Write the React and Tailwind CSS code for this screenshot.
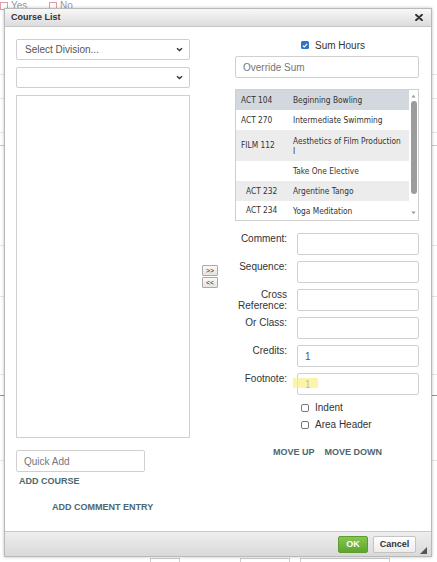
import React from "react";

const rows = [
  { code: "ACT 104", name: ["Beginning Bowling"], bg: "bg-[#d3d8de]", h: "h-[20px]" },
  { code: "ACT 270", name: ["Intermediate Swimming"], bg: "bg-white", h: "h-[20px]" },
  { code: "FILM 112", name: ["Aesthetics of Film Production", "I"], bg: "bg-[#ececec]", h: "h-[31px]" },
  { code: "", name: ["Take One Elective"], bg: "bg-white", h: "h-[20px]" },
  { code: "ACT 232", name: ["Argentine Tango"], bg: "bg-[#ececec]", h: "h-[20px]", indent: true },
  { code: "ACT 234", name: ["Yoga Meditation"], bg: "bg-white", h: "h-[19px]", indent: true },
];

function Chevron() {
  return (
    <svg width="7" height="5" viewBox="0 0 7 5" className="shrink-0">
      <path d="M1 1.2 L3.5 3.6 L6 1.2" fill="none" stroke="#333" strokeWidth="1.4" />
    </svg>
  );
}

function Select({ text }) {
  return (
    <div className="h-[21px] w-full border border-[#cfcfcf] rounded-[2px] bg-white flex items-center justify-between pl-[8px] pr-[6px]">
      <span className="text-[10px] text-[#555]">{text}</span>
      <Chevron />
    </div>
  );
}

function Input({ placeholder, value, className = "" }) {
  return (
    <div className={`h-[22px] border border-[#d0d0d0] rounded-[2px] bg-white flex items-center pl-[7px] ${className}`}>
      {placeholder && <span className="text-[10px] text-[#777]">{placeholder}</span>}
      {value && <span className="text-[10px] text-[#555]">{value}</span>}
    </div>
  );
}

function Box() {
  return <span className="w-[8px] h-[8px] border border-[#777] rounded-[2px] bg-white shrink-0" />;
}

function FormRow({ label, children }) {
  return (
    <div className="h-[22px] flex">
      <div className="w-[52px] text-right text-[10px] leading-[11px] text-[#333]">{label}</div>
      <div className="ml-[10px] w-[122px]">{children}</div>
    </div>
  );
}

export default function App() {
  return (
    <div
      className="relative w-[437px] h-[562px] overflow-hidden bg-white"
      style={{ fontFamily: '"Liberation Sans", Arial, sans-serif' }}
    >
      {/* background page behind the dialog */}
      <div className="absolute left-0 top-[1px] flex items-center gap-[3px]">
        <span className="w-[8px] h-[8px] border border-[#e29aa6] bg-white" />
        <span className="text-[10px] text-[#999] leading-[10px]">Yes</span>
      </div>
      <div className="absolute left-[49px] top-[1px] flex items-center gap-[3px]">
        <span className="w-[8px] h-[8px] border border-[#e29aa6] bg-white" />
        <span className="text-[10px] text-[#999] leading-[10px]">No</span>
      </div>
      <div className="absolute left-0 right-0 top-[74px] border-t border-[#e6e6e6]" />
      <div className="absolute left-0 right-0 top-[98px] border-t border-[#e6e6e6]" />
      <div className="absolute left-0 right-0 top-[132px] border-t border-[#e6e6e6]" />
      <div className="absolute left-0 right-0 top-[145px] border-t border-[#c9c3e6]" />
      <div className="absolute left-0 right-0 top-[245px] border-t border-[#e6e6e6]" />
      <div className="absolute left-0 right-0 top-[296px] border-t border-[#e6e6e6]" />
      <div className="absolute left-0 right-0 top-[374px] border-t border-[#e6e6e6]" />
      <div className="absolute left-0 right-0 top-[395px] border-t border-[#8f86cf]" />
      <div className="absolute left-0 right-0 top-[460px] border-t border-[#e6e6e6]" />
      <div className="absolute left-[150px] top-[558px] w-[30px] h-[8px] border border-[#ccc]" />
      <div className="absolute left-[240px] top-[558px] w-[50px] h-[8px] border border-[#ccc]" />
      <div className="absolute left-[300px] top-[558px] w-[90px] h-[8px] border border-[#ccc]" />

      {/* dialog window */}
      <div className="absolute left-[4px] top-[8px] w-[428px] h-[549px] border border-[#b9b9b9] bg-white flex flex-col shadow-[0_0_3px_rgba(0,0,0,0.25)]">
        {/* title bar */}
        <div className="h-[18px] shrink-0 flex items-center justify-between pl-[6px] pr-[8px] bg-gradient-to-b from-[#f8f8f8] to-[#dcdcdc] border-b border-[#c6c6c6]">
          <span className="text-[9px] font-bold text-[#333]">Course List</span>
          <svg width="8" height="7" viewBox="0 0 8 7">
            <path d="M1 0.8 L7 6.2 M7 0.8 L1 6.2" stroke="#333" strokeWidth="1.9" strokeLinecap="round" />
          </svg>
        </div>

        {/* body */}
        <div className="flex-1 flex pt-[12px] pl-[11px]">
          {/* left column */}
          <div className="w-[174px] flex flex-col">
            <Select text="Select Division..." />
            <div className="mt-[7px]">
              <Select text="" />
            </div>
            <div className="mt-[7px] h-[343px] border border-[#d0d0d0] bg-white" />
            <Input placeholder="Quick Add" className="mt-[12px] w-[129px] h-[21px]" />
            <div className="mt-[4px] ml-[3px] text-[9px] leading-[10px] font-semibold text-[#4c6770]">ADD COURSE</div>
            <div className="mt-[16px] ml-[36px] text-[9px] leading-[10px] font-semibold text-[#4c6770]">ADD COMMENT ENTRY</div>
          </div>

          {/* middle buttons */}
          <div className="ml-[12px] w-[16px] pt-[226px] flex flex-col gap-[1px]">
            <div className="h-[11px] border border-[#aaa] rounded-[1px] bg-gradient-to-b from-[#fafafa] to-[#e4e4e4] flex items-center justify-center text-[7px] leading-none text-[#222]">&gt;&gt;</div>
            <div className="h-[11px] border border-[#aaa] rounded-[1px] bg-gradient-to-b from-[#fafafa] to-[#e4e4e4] flex items-center justify-center text-[7px] leading-none text-[#222]">&lt;&lt;</div>
          </div>

          {/* right column */}
          <div className="ml-[17px] w-[184px] flex flex-col">
            <div className="h-[12px] flex items-center ml-[66px] gap-[6px]">
              <span className="w-[8px] h-[8px] rounded-[1.5px] bg-[#2c74c9] flex items-center justify-center">
                <svg width="6" height="5" viewBox="0 0 6 5">
                  <path d="M0.8 2.6 L2.3 4 L5.2 0.9" fill="none" stroke="white" strokeWidth="1.2" />
                </svg>
              </span>
              <span className="text-[10px] text-[#333]">Sum Hours</span>
            </div>
            <Input placeholder="Override Sum" className="mt-[5px] h-[21px]" />

            {/* course list box */}
            <div className="mt-[11px] h-[132px] border border-[#cfcfcf] bg-white flex">
              <div className="flex-1 flex flex-col" style={{ fontFamily: '"DejaVu Sans Condensed", "DejaVu Sans", sans-serif' }}>
                {rows.map((r, i) => (
                  <div key={i} className={`${r.h} ${r.bg} flex items-center text-[8.3px] text-[#333]`}>
                    <div className={`w-[52px] shrink-0 ${r.indent ? "pl-[10px]" : "pl-[5px]"}`}>{r.code}</div>
                    <div className="pl-[5px] leading-[10px]">
                      {r.name.map((n, j) => (
                        <div key={j} className="whitespace-nowrap">{n}</div>
                      ))}
                    </div>
                  </div>
                ))}
              </div>
              <div className="w-[9px] shrink-0 flex flex-col items-center">
                <svg width="5" height="4" viewBox="0 0 5 4" className="mt-[4px]">
                  <path d="M0.5 3.5 L2.5 0.8 L4.5 3.5 Z" fill="#999" />
                </svg>
                <div className="mt-[3px] w-[6px] h-[93px] rounded-[3px] bg-[#9c9c9c]" />
                <svg width="5" height="4" viewBox="0 0 5 4" className="mt-[17px]">
                  <path d="M0.5 0.5 L2.5 3.2 L4.5 0.5 Z" fill="#999" />
                </svg>
              </div>
            </div>

            {/* form rows */}
            <div className="mt-[12px] flex flex-col gap-[6px]">
              <FormRow label="Comment:"><Input /></FormRow>
              <FormRow label="Sequence:"><Input /></FormRow>
              <FormRow label={<>Cross<br />Reference:</>}><Input /></FormRow>
              <FormRow label="Or Class:"><Input /></FormRow>
              <FormRow label="Credits:"><Input value="1" /></FormRow>
              <FormRow label="Footnote:">
                <div className="relative">
                  <Input value="1" />
                  <div className="absolute left-[-4px] top-[5px] w-[25px] h-[10px] bg-[#fbef8a] opacity-70" />
                </div>
              </FormRow>
            </div>

            <div className="mt-[7px] ml-[66px] h-[12px] flex items-center gap-[6px]">
              <Box />
              <span className="text-[10px] text-[#333] -mt-[2px]">Indent</span>
            </div>
            <div className="mt-[5px] ml-[66px] h-[12px] flex items-center gap-[6px]">
              <Box />
              <span className="text-[10px] text-[#333] -mt-[2px]">Area Header</span>
            </div>

            <div className="mt-[16px] ml-[38px] flex gap-[10px] text-[9px] leading-[10px] font-semibold text-[#4c6770]">
              <span>MOVE UP</span>
              <span>MOVE DOWN</span>
            </div>
          </div>
        </div>

        {/* footer */}
        <div className="relative h-[25px] shrink-0 border-t border-[#c8c8c8] bg-gradient-to-b from-[#eeeeee] to-[#d9d9d9] flex items-start justify-end pt-[4px] pr-[15px] gap-[5px]">
          <div className="w-[30px] h-[17px] rounded-[2px] border border-[#5c9c30] bg-gradient-to-b from-[#86c64c] to-[#5ea52e] flex items-center justify-center text-[9px] font-bold text-white">OK</div>
          <div className="w-[43px] h-[17px] rounded-[2px] border border-[#c4c4c4] bg-gradient-to-b from-[#ffffff] to-[#ececec] flex items-center justify-center text-[9px] font-bold text-[#333]">Cancel</div>
          <svg width="7" height="7" viewBox="0 0 7 7" className="absolute right-[4px] bottom-[2px]">
            <path d="M7 0 L7 7 L0 7 Z" fill="#555" />
          </svg>
        </div>
      </div>
    </div>
  );
}
